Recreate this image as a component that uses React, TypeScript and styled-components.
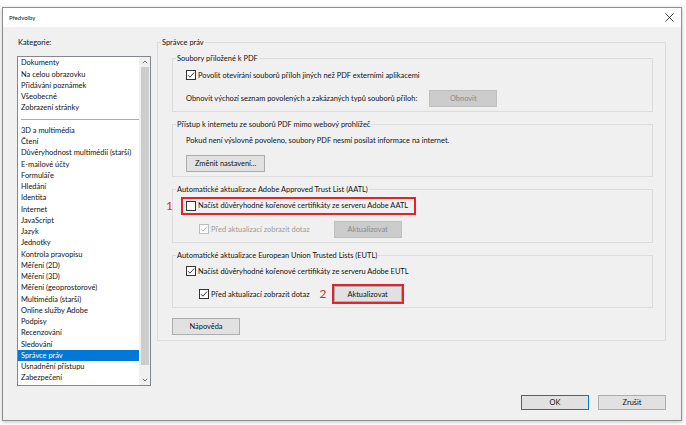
import React from "react";
import styled, { createGlobalStyle, css } from "styled-components";

const GlobalStyle = createGlobalStyle`
  html, body {
    margin: 0;
    padding: 0;
    background: #ffffff;
  }
  body {
    font-family: Lato, "Noto Sans", sans-serif;
    font-size: 7.45px;
    color: #111;
  }
  * {
    box-sizing: border-box;
  }
`;

const Page = styled.div`
  width: 686px;
  height: 425px;
  padding: 7px 0 0 2px;
`;

const Window = styled.div`
  width: 680px;
  height: 414px;
  border: 1px solid #8f8f8f;
  background: #f0f0f0;
  display: flex;
  flex-direction: column;
  box-shadow: 0 1px 4px rgba(0, 0, 0, 0.25);
`;

const TitleBar = styled.div`
  height: 19px;
  flex: none;
  background: #ffffff;
  display: flex;
  align-items: center;
  justify-content: space-between;
  padding: 0 6px 0 6px;
  font-size: 6px;
`;

const CloseButton = styled.div`
  width: 12px;
  height: 12px;
  display: flex;
  align-items: center;
  justify-content: center;
`;

const Body = styled.div`
  flex: 1;
  display: flex;
  flex-direction: column;
  padding: 10px 15px 10px 14px;
`;

const Main = styled.div`
  display: flex;
  gap: 6px;
  align-items: flex-start;
`;

const Sidebar = styled.div`
  width: 134px;
  display: flex;
  flex-direction: column;
`;

const Caption = styled.div`
  line-height: 11.25px;
  padding-left: 1px;
  margin-bottom: 8px;
`;

const ListBox = styled.div`
  height: 330px;
  border: 1px solid #828790;
  background: #ffffff;
  display: flex;
  overflow: hidden;
`;

const Items = styled.div`
  flex: 1;
  overflow: hidden;
  min-width: 0;
`;

const Item = styled.div<{ $selected?: boolean }>`
  line-height: 11.25px;
  height: 11.25px;
  padding-left: 3px;
  white-space: nowrap;
  ${({ $selected }) =>
    $selected &&
    css`
      background: #0078d7;
      color: #ffffff;
    `}
`;

const Separator = styled.div`
  height: 11.25px;
  display: flex;
  align-items: center;
  padding: 0 0 0 3px;

  &::after {
    content: "";
    flex: 1;
    height: 1px;
    background: #86b5df;
  }
`;

const Scrollbar = styled.div`
  width: 11px;
  background: #f0f0f0;
  display: flex;
  flex-direction: column;
`;

const ScrollArrow = styled.div`
  height: 10px;
  display: flex;
  align-items: center;
  justify-content: center;
`;

const Track = styled.div`
  flex: 1;
  display: flex;
  flex-direction: column;
  padding: 0 1.5px 10px;
`;

const Thumb = styled.div`
  flex: 1;
  background: #cdcdcd;
`;

const Group = styled.fieldset<{ $outer?: boolean }>`
  margin: 0;
  padding: 0;
  min-width: 0;
  border: 1px solid #dcdcdc;
  ${({ $outer }) =>
    $outer &&
    css`
      flex: 1;
    `}
`;

const Legend = styled.legend`
  margin-left: 3px;
  padding: 0 1px;
  line-height: 11.25px;
`;

const OuterBody = styled.div`
  display: flex;
  flex-direction: column;
  gap: 6.5px;
  padding: 5px 12px 5px 14px;
`;

const GroupBody = styled.div`
  display: flex;
  flex-direction: column;
  gap: 6px;
  padding: 2px 14px 4.5px 13px;
`;

const Row = styled.div<{ $indent?: boolean; $gap?: number }>`
  display: flex;
  align-items: center;
  min-height: 17px;
  gap: ${({ $gap }) => $gap ?? 8}px;
  padding-left: ${({ $indent }) => ($indent ? 13 : 0)}px;
`;

const CheckLabel = styled.label<{ $disabled?: boolean }>`
  display: flex;
  align-items: center;
  gap: 2px;
  white-space: nowrap;
  color: ${({ $disabled }) => ($disabled ? "#9a9a9a" : "#111")};
`;

const Text = styled.span`
  white-space: nowrap;
`;

const Button = styled.button<{ $disabled?: boolean; $primary?: boolean }>`
  height: 17px;
  min-width: 68px;
  padding: 0 8px;
  font: inherit;
  color: #111;
  background: #e1e1e1;
  border: 1px solid ${({ $primary }) => ($primary ? "#0078d7" : "#adadad")};
  ${({ $disabled }) =>
    $disabled &&
    css`
      background: #cccccc;
      border-color: #bfbfbf;
      color: #8a8a8a;
    `}
`;

const HelpButton = styled(Button)`
  align-self: flex-start;
  margin-top: 3px;
`;

const Mark = styled.span`
  position: relative;
  display: inline-flex;
  align-items: center;
  border: 2px solid #e3242b;
`;

const MarkRow = styled(Mark)`
  height: 17.5px;
  margin-left: -5px;
  padding: 0 6px 0 3px;
`;

const MarkButton = styled(Mark)`
  margin: -2px 0 -2px -2px;

  ${Button} {
    height: 16px;
    border-color: #adadad;
  }
`;

const MarkNumber = styled.span<{ $offset: number }>`
  position: absolute;
  right: calc(100% + ${({ $offset }) => $offset}px);
  top: 50%;
  transform: translateY(-50%);
  color: #e3242b;
  font-size: 12px;
  line-height: 1;
`;

const Footer = styled.div`
  margin-top: auto;
  display: flex;
  justify-content: flex-end;
  gap: 9px;

  ${Button} {
    height: 15px;
  }
`;

const Checkbox = ({ checked, disabled }: { checked?: boolean; disabled?: boolean }) => {
  const color = disabled ? "#bcbcbc" : "#333333";
  const tick = disabled ? "#a8a8a8" : "#222222";
  return (
    <svg width="10" height="10" viewBox="0 0 10 10">
      <rect x="0.5" y="0.5" width="9" height="9" fill="#ffffff" stroke={color} />
      {checked && (
        <path d="M2 5.2 L4 7.2 L8 2.6" fill="none" stroke={tick} strokeWidth="0.9" />
      )}
    </svg>
  );
};

const Chevron = ({ down }: { down?: boolean }) => (
  <svg width="6" height="4" viewBox="0 0 6 4">
    <path
      d={down ? "M0.8 0.8 L3 3 L5.2 0.8" : "M0.8 3.2 L3 1 L5.2 3.2"}
      fill="none"
      stroke="#606060"
      strokeWidth="0.9"
    />
  </svg>
);

const topItems = ["Dokumenty", "Na celou obrazovku", "Přidávání poznámek", "Všeobecné", "Zobrazení stránky"];

const otherItems = [
  "3D a multimédia",
  "Čtení",
  "Důvěryhodnost multimédií (starší)",
  "E-mailové účty",
  "Formuláře",
  "Hledání",
  "Identita",
  "Internet",
  "JavaScript",
  "Jazyk",
  "Jednotky",
  "Kontrola pravopisu",
  "Měření (2D)",
  "Měření (3D)",
  "Měření (geoprostorové)",
  "Multimédia (starší)",
  "Online služby Adobe",
  "Podpisy",
  "Recenzování",
  "Sledování",
  "Správce práv",
  "Usnadnění přístupu",
  "Zabezpečení",
  "Zabezpečení (rozšířené)",
];

export default function App() {
  return (
    <Page>
      <GlobalStyle />
      <Window>
        <TitleBar>
          <span>Předvolby</span>
          <CloseButton>
            <svg width="9" height="9" viewBox="0 0 9 9">
              <path d="M0.5 0.5 L8.5 8.5 M8.5 0.5 L0.5 8.5" stroke="#111" strokeWidth="0.8" />
            </svg>
          </CloseButton>
        </TitleBar>
        <Body>
          <Main>
            <Sidebar>
              <Caption>Kategorie:</Caption>
              <ListBox>
                <Items>
                  {topItems.map((name) => (
                    <Item key={name}>{name}</Item>
                  ))}
                  <Separator />
                  {otherItems.map((name) => (
                    <Item key={name} $selected={name === "Správce práv"}>
                      {name}
                    </Item>
                  ))}
                </Items>
                <Scrollbar>
                  <ScrollArrow>
                    <Chevron />
                  </ScrollArrow>
                  <Track>
                    <Thumb />
                  </Track>
                  <ScrollArrow>
                    <Chevron down />
                  </ScrollArrow>
                </Scrollbar>
              </ListBox>
            </Sidebar>

            <Group $outer>
              <Legend>Správce práv</Legend>
              <OuterBody>
                <Group>
                  <Legend>Soubory přiložené k PDF</Legend>
                  <GroupBody>
                    <Row>
                      <CheckLabel>
                        <Checkbox checked />
                        Povolit otevírání souborů příloh jiných než PDF externími aplikacemi
                      </CheckLabel>
                    </Row>
                    <Row $gap={12}>
                      <Text>Obnovit výchozí seznam povolených a zakázaných typů souborů příloh:</Text>
                      <Button $disabled>Obnovit</Button>
                    </Row>
                  </GroupBody>
                </Group>

                <Group>
                  <Legend>Přístup k internetu ze souborů PDF mimo webový prohlížeč</Legend>
                  <GroupBody>
                    <Row>
                      <Text>Pokud není výslovně povoleno, soubory PDF nesmí posílat informace na internet.</Text>
                    </Row>
                    <Row>
                      <Button>Změnit nastavení...</Button>
                    </Row>
                  </GroupBody>
                </Group>

                <Group>
                  <Legend>Automatické aktualizace Adobe Approved Trust List (AATL)</Legend>
                  <GroupBody>
                    <Row>
                      <MarkRow>
                        <MarkNumber $offset={10}>1</MarkNumber>
                        <CheckLabel>
                          <Checkbox />
                          Načíst důvěryhodné kořenové certifikáty ze serveru Adobe AATL
                        </CheckLabel>
                      </MarkRow>
                    </Row>
                    <Row $indent $gap={24}>
                      <CheckLabel $disabled>
                        <Checkbox checked disabled />
                        Před aktualizací zobrazit dotaz
                      </CheckLabel>
                      <Button $disabled>Aktualizovat</Button>
                    </Row>
                  </GroupBody>
                </Group>

                <Group>
                  <Legend>Automatické aktualizace European Union Trusted Lists (EUTL)</Legend>
                  <GroupBody>
                    <Row>
                      <CheckLabel>
                        <Checkbox checked />
                        Načíst důvěryhodné kořenové certifikáty ze serveru Adobe EUTL
                      </CheckLabel>
                    </Row>
                    <Row $indent $gap={24}>
                      <CheckLabel>
                        <Checkbox checked />
                        Před aktualizací zobrazit dotaz
                      </CheckLabel>
                      <MarkButton>
                        <MarkNumber $offset={7}>2</MarkNumber>
                        <Button>Aktualizovat</Button>
                      </MarkButton>
                    </Row>
                  </GroupBody>
                </Group>

                <HelpButton>Nápověda</HelpButton>
              </OuterBody>
            </Group>
          </Main>

          <Footer>
            <Button $primary>OK</Button>
            <Button>Zrušit</Button>
          </Footer>
        </Body>
      </Window>
    </Page>
  );
}
